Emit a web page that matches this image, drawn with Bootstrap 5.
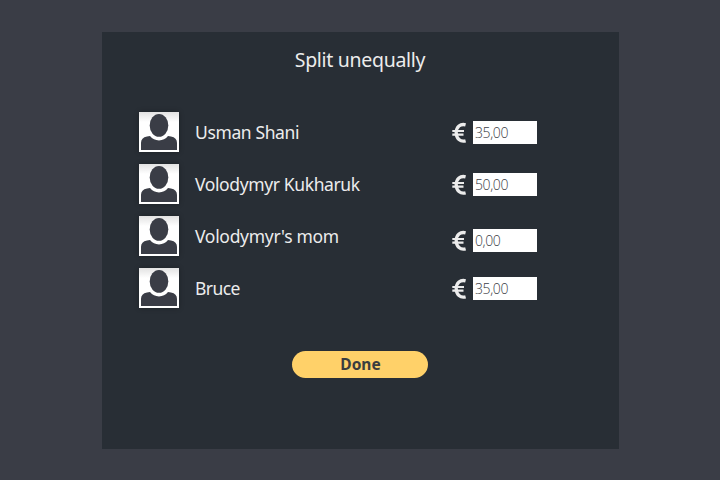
<!DOCTYPE html>
<html lang="en">
<head>
<meta charset="utf-8">
<meta name="viewport" content="width=device-width, initial-scale=1">
<title>Split unequally</title>
<link href="https://cdn.jsdelivr.net/npm/bootstrap@5.3.0/dist/css/bootstrap.min.css" rel="stylesheet">
<style>
body{background:#3a3d46;color:#ececec;font-family:"Noto Sans","Open Sans",sans-serif;height:480px;overflow:hidden;padding-top:32px;padding-left:102px}
.split-panel{width:517px;height:417px;background:#282e35;padding-top:14px}
.split-title{font-size:19.5px;line-height:28px;letter-spacing:-.3px;margin:0 1px 38px 0;font-weight:400}
.person-list{gap:12px;padding:0 82px 0 37px}
.person{height:40px}
.avatar{width:40px;height:40px;background:linear-gradient(#e2e2e2,#fff 10px);box-shadow:0 0 5px rgba(0,0,0,.3)}
.person-name{font-size:17.5px;line-height:24px;letter-spacing:-.38px;margin-left:16px;white-space:nowrap}
.n3{letter-spacing:-.3px}
.n4{letter-spacing:-.55px}
.euro{width:14px;height:21px;margin-right:7px}
.amount{width:64px;height:23px;padding:1px 2px 0;border:0;border-radius:0;background:#fff;color:#3a3d46;font-family:"Open Sans",sans-serif;font-weight:300;font-size:14px;letter-spacing:-.4px;outline:0}
.lowered{padding-top:8px}
.done{width:136px;height:27px;margin-top:43px;margin-right:2px;padding:0 0 0 2px;border:0;border-radius:14px;background:#ffd169;color:#3a3d40;font-weight:700;font-size:15.5px;line-height:27px}
</style>
<script src="https://cdn.jsdelivr.net/npm/bootstrap@5.3.0/dist/js/bootstrap.bundle.min.js"></script>
</head>
<body>
<svg class="d-none" xmlns="http://www.w3.org/2000/svg">
<symbol id="person" viewBox="0 0 40 40"><path d="M2 38V31Q2 25.5 8 24.5L11 24Q14.5 28.4 20 28.4T29 24L32 24.5Q38 25.5 38 31V38Z" fill="#3a3d46"/><ellipse cx="20" cy="13.4" rx="9.3" ry="11.4" fill="#3a3d46"/></symbol>
<symbol id="euro" viewBox="0 0 14 21"><g fill="none" stroke="#ececec"><path d="M13.6 2.8C8.4 1.4 4.2 5 4.2 10.8S8.4 20.2 13.6 18.8" stroke-width="3.3"/><path d="M.3 9H12M.3 12.6H11.5" stroke-width="2.2"/></g></symbol>
</svg>
<main class="split-panel d-flex flex-column">
<h1 class="split-title text-center">Split unequally</h1>
<div class="person-list d-flex flex-column">
<div class="person d-flex align-items-center"><svg class="avatar"><use href="#person"/></svg><span class="person-name n1">Usman Shani</span><div class="d-flex align-items-center ms-auto"><svg class="euro"><use href="#euro"/></svg><input class="amount" value="35,00" aria-label="Usman Shani amount"></div></div>
<div class="person d-flex align-items-center"><svg class="avatar"><use href="#person"/></svg><span class="person-name n2">Volodymyr Kukharuk</span><div class="d-flex align-items-center ms-auto"><svg class="euro"><use href="#euro"/></svg><input class="amount" value="50,00" aria-label="Volodymyr Kukharuk amount"></div></div>
<div class="person d-flex align-items-center"><svg class="avatar"><use href="#person"/></svg><span class="person-name n3">Volodymyr's mom</span><div class="d-flex align-items-center ms-auto lowered"><svg class="euro"><use href="#euro"/></svg><input class="amount" value="0,00" aria-label="Volodymyr's mom amount"></div></div>
<div class="person d-flex align-items-center"><svg class="avatar"><use href="#person"/></svg><span class="person-name n4">Bruce</span><div class="d-flex align-items-center ms-auto"><svg class="euro"><use href="#euro"/></svg><input class="amount" value="35,00" aria-label="Bruce amount"></div></div>
</div>
<button type="button" class="done btn align-self-center">Done</button>
</main>
</body>
</html>
